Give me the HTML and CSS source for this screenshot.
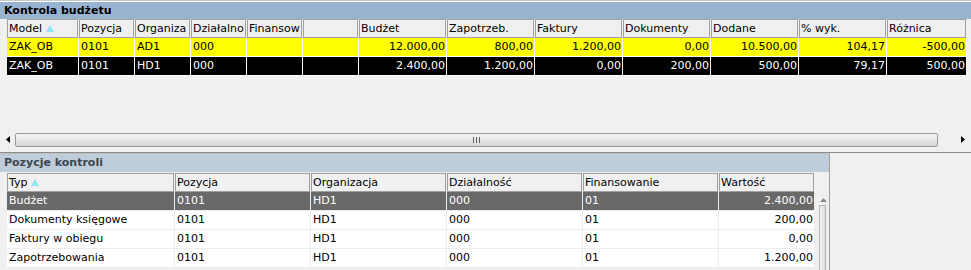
FILE: index.html
```html
<!DOCTYPE html>
<html lang="pl">
<head>
<meta charset="utf-8">
<title>Kontrola budżetu</title>
<link rel="stylesheet" href="styles.css">
</head>
<body>
<div class="app">
  <section class="panel panel-top">
    <div class="topline"></div>
    <div class="caption">Kontrola budżetu</div>
    <div class="grid-area">
      <div class="row upper head">
        <div class="hcell">Model <svg class="sort" width="8" height="7" viewBox="0 0 8 7"><polygon points="4,0 8,7 0,7" fill="#8ee6f4"/></svg></div>
        <div class="hcell">Pozycja</div>
        <div class="hcell">Organiza</div>
        <div class="hcell">Działalno</div>
        <div class="hcell">Finansow</div>
        <div class="hcell"></div>
        <div class="hcell">Budżet</div>
        <div class="hcell">Zapotrzeb.</div>
        <div class="hcell">Faktury</div>
        <div class="hcell">Dokumenty</div>
        <div class="hcell">Dodane</div>
        <div class="hcell">% wyk.</div>
        <div class="hcell">Różnica</div>
      </div>
      <div class="row upper data yellow">
        <div class="cell">ZAK_OB</div>
        <div class="cell">0101</div>
        <div class="cell">AD1</div>
        <div class="cell">000</div>
        <div class="cell"></div>
        <div class="cell"></div>
        <div class="cell num">12.000,00</div>
        <div class="cell num">800,00</div>
        <div class="cell num">1.200,00</div>
        <div class="cell num">0,00</div>
        <div class="cell num">10.500,00</div>
        <div class="cell num">104,17</div>
        <div class="cell num">-500,00</div>
      </div>
      <div class="row upper data black">
        <div class="cell">ZAK_OB</div>
        <div class="cell">0101</div>
        <div class="cell">HD1</div>
        <div class="cell">000</div>
        <div class="cell"></div>
        <div class="cell"></div>
        <div class="cell num">2.400,00</div>
        <div class="cell num">1.200,00</div>
        <div class="cell num">0,00</div>
        <div class="cell num">200,00</div>
        <div class="cell num">500,00</div>
        <div class="cell num">79,17</div>
        <div class="cell num">500,00</div>
      </div>
    </div>
    <div class="hscroll">
      <div class="sbtn"><svg width="4" height="7" viewBox="0 0 4 7"><polygon points="4,0 4,7 0,3.5" fill="#000"/></svg></div>
      <div class="hthumb"><span class="grip"></span></div>
      <div class="htrack"></div>
      <div class="sbtn right"><svg width="4" height="7" viewBox="0 0 4 7"><polygon points="0,0 0,7 4,3.5" fill="#000"/></svg></div>
    </div>
  </section>
  <div class="splitter"></div>
  <section class="panel panel-bottom">
    <div class="frame">
      <div class="caption inactive">Pozycje kontroli</div>
      <div class="lower-body">
        <div class="lower-grid">
          <div class="row lower head">
            <div class="hcell">Typ <svg class="sort" width="8" height="7" viewBox="0 0 8 7"><polygon points="4,0 8,7 0,7" fill="#8ee6f4"/></svg></div>
            <div class="hcell">Pozycja</div>
            <div class="hcell">Organizacja</div>
            <div class="hcell">Działalność</div>
            <div class="hcell">Finansowanie</div>
            <div class="hcell">Wartość</div>
          </div>
          <div class="row lower data selected">
            <div class="cell">Budżet</div>
            <div class="cell">0101</div>
            <div class="cell">HD1</div>
            <div class="cell">000</div>
            <div class="cell">01</div>
            <div class="cell num">2.400,00</div>
          </div>
          <div class="row lower data">
            <div class="cell">Dokumenty księgowe</div>
            <div class="cell">0101</div>
            <div class="cell">HD1</div>
            <div class="cell">000</div>
            <div class="cell">01</div>
            <div class="cell num">200,00</div>
          </div>
          <div class="row lower data">
            <div class="cell">Faktury w obiegu</div>
            <div class="cell">0101</div>
            <div class="cell">HD1</div>
            <div class="cell">000</div>
            <div class="cell">01</div>
            <div class="cell num">0,00</div>
          </div>
          <div class="row lower data">
            <div class="cell">Zapotrzebowania</div>
            <div class="cell">0101</div>
            <div class="cell">HD1</div>
            <div class="cell">000</div>
            <div class="cell">01</div>
            <div class="cell num">1.200,00</div>
          </div>
        </div>
        <div class="vscroll">
          <svg class="vup" width="7" height="4" viewBox="0 0 7 4"><polygon points="0,4 7,4 3.5,0" fill="#8a8a8a"/></svg>
          <div class="vthumb"></div>
        </div>
      </div>
    </div>
  </section>
</div>
</body>
</html>
```

FILE: styles.css
```css
* { box-sizing: border-box; }
html, body {
  margin: 0;
  padding: 0;
  background: #f0f0f0;
  font-family: "DejaVu Sans", Verdana, sans-serif;
  font-size: 11px;
  color: #000;
}
.app {
  width: 971px;
  height: 270px;
  overflow: hidden;
}
.topline {
  height: 2px;
  border-top: 1px solid #c8c8c8;
  background: #fff;
}
.caption {
  height: 17px;
  line-height: 17px;
  padding-left: 4px;
  background: #99b4d1;
  font-weight: bold;
  white-space: nowrap;
}
.caption.inactive {
  background: #bfcddb;
  color: #3a4650;
  height: 18px;
  line-height: 18px;
}
.grid-area {
  height: 112px;
  padding-left: 7px;
}
.row {
  display: grid;
  height: 19px;
}
.row.upper {
  grid-template-columns: 72px 56px 56px 56px 56px 56px 88px 88px 88px 88px 88px 88px 80px;
}
.row.lower {
  grid-template-columns: 168px 136px 136px 136px 136px 96px;
}
.hcell {
  height: 19px;
  margin-right: 1px;
  border: 1px solid #a0a0a0;
  background: #f0f0f0;
  padding-left: 1px;
  line-height: 17px;
  white-space: nowrap;
  overflow: hidden;
}
.sort {
  vertical-align: 0;
}
.cell {
  height: 19px;
  line-height: 18px;
  padding: 0 1px 0 2px;
  border-right: 1px solid #fff;
  border-bottom: 1px solid #fff;
  white-space: nowrap;
  overflow: hidden;
}
.cell.num { text-align: right; }
.yellow .cell { background: #ffff00; color: #000; }
.black .cell { background: #000; color: #fff; }
.lower.data .cell {
  background: #fff;
  border-right-color: #ececec;
  border-bottom-color: #ececec;
}
.lower.data.selected .cell {
  background: #696969;
  color: #fff;
}

/* horizontal scrollbar */
.hscroll {
  display: flex;
  height: 17px;
  align-items: stretch;
}
.sbtn {
  width: 15px;
  display: flex;
  align-items: center;
  justify-content: center;
}
.sbtn.right {
  width: 17px;
}
.hthumb {
  width: 923px;
  margin: 2px 0 1px;
  border: 1px solid #9a9a9a;
  border-radius: 2px;
  background: linear-gradient(#f6f6f6, #e6e6e6 50%, #d6d6d6);
  display: flex;
  align-items: center;
  justify-content: center;
}
.grip {
  width: 7px;
  height: 6px;
  background: repeating-linear-gradient(90deg, #606060 0 1px, transparent 1px 3px);
}
.htrack { flex: 1; }

.splitter {
  height: 5px;
  border-bottom: 1px solid #8c8c8c;
}

/* bottom panel */
.frame {
  width: 830px;
  border-top: 1px solid #c0c0c0;
  border-right: 1px solid #a0a0a0;
  height: 119px;
}
.lower-body {
  display: flex;
  padding-left: 7px;
  padding-top: 1px;
}
.lower-grid {
  width: 808px;
}
.vscroll {
  width: 14px;
  padding-top: 25px;
  display: flex;
  flex-direction: column;
  align-items: center;
}
.vup { margin-left: 2px; }
.vthumb {
  margin-top: 3px;
  width: 7px;
  height: 80px;
  border: 1px solid #b4b4b4;
  border-bottom: none;
  background: linear-gradient(90deg, #f4f4f4, #dadada);
}
```
